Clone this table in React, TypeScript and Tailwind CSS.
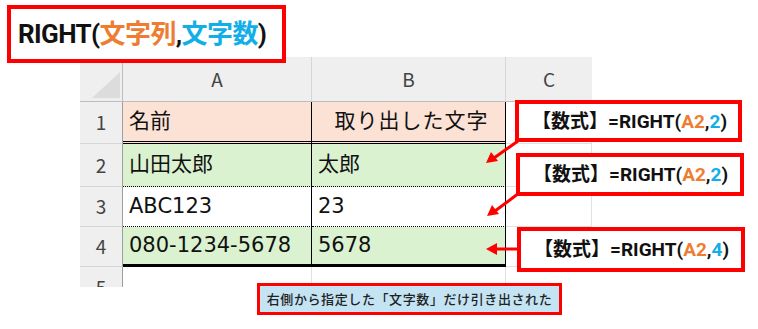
import React from 'react';

const ORANGE = 'text-[#ED7D31]';
const BLUE = 'text-[#12AEE8]';

const cellFont = { fontFamily: '"DejaVu Sans", "Noto Sans CJK JP", sans-serif' };
const uiFont = { fontFamily: '"Noto Sans CJK JP", "Noto Sans", sans-serif' };
const boldFont = { fontFamily: 'Roboto, "Noto Sans CJK JP", sans-serif' };

function Formula({ n, className }: { n: string; className: string }) {
  return (
    <div
      className={`absolute border-[4px] border-[#FF0000] bg-white flex items-center whitespace-nowrap pl-[13px] text-[19px] font-bold text-[#111] leading-none ${className}`}
      style={boldFont}
    >
      <span>【数式】=RIGHT(</span>
      <span className={ORANGE}>A2</span>
      <span>,</span>
      <span className={BLUE}>{n}</span>
      <span>)</span>
    </div>
  );
}

export default function App() {
  const head = 'bg-[#EFEFEF] flex items-center justify-center text-[19px] text-[#444]';
  const rowNum = `${head} border-r border-r-[#9E9E9E] border-b border-b-[#D6D6D6]`;
  const txt = 'flex items-center whitespace-nowrap pl-[6px] text-[21px] text-[#111]';
  const dotted = 'border-r border-r-black border-b border-b-black [border-bottom-style:dotted]';
  const cEmpty = 'border-r border-b border-[#E1E1E1] bg-white';

  return (
    <div className="relative w-[758px] h-[329px] bg-white overflow-hidden" style={uiFont}>
      {/* sheet */}
      <div className="ml-[80px] pt-[57px]">
        <div className="grid grid-cols-[43px_189px_194px_86px] grid-rows-[45px_42px_43px_40px_40px_20px]">
          {/* header row */}
          <div className="relative bg-[#EFEFEF] border-r border-b border-[#BDBDBD]">
            <svg className="absolute left-0 top-0" width="42" height="44">
              <polygon points="12,41 40,15 40,41" fill="#DCDCDC" />
            </svg>
          </div>
          <div className={`${head} border-r border-r-[#D6D6D6] border-b border-b-[#BDBDBD]`}>A</div>
          <div className={`${head} border-r border-r-[#D6D6D6] border-b border-b-[#BDBDBD]`}>B</div>
          <div className={`${head} border-b border-b-[#BDBDBD]`}>C</div>

          {/* row 1 */}
          <div className={rowNum}>1</div>
          <div className={`${txt} bg-[#FBE2D5] border-r border-r-black border-b-[3px] border-b-black [border-bottom-style:double]`} style={cellFont}>名前</div>
          <div className={`${txt} justify-center pl-0 tracking-[1px] bg-[#FBE2D5] border-r border-r-black border-b-[3px] border-b-black [border-bottom-style:double]`} style={cellFont}>取り出した文字</div>
          <div className={cEmpty}></div>

          {/* row 2 */}
          <div className={rowNum}>2</div>
          <div className={`${txt} bg-[#DAF2D0] ${dotted}`} style={cellFont}>山田太郎</div>
          <div className={`${txt} bg-[#DAF2D0] ${dotted}`} style={cellFont}>太郎</div>
          <div className={cEmpty}></div>

          {/* row 3 */}
          <div className={rowNum}>3</div>
          <div className={`${txt} bg-white ${dotted}`} style={cellFont}>ABC123</div>
          <div className={`${txt} bg-white ${dotted}`} style={cellFont}>23</div>
          <div className={cEmpty}></div>

          {/* row 4 */}
          <div className={rowNum}>4</div>
          <div className={`${txt} bg-[#DAF2D0] border-r border-r-black border-b-[3px] border-b-black`} style={cellFont}>080-1234-5678</div>
          <div className={`${txt} bg-[#DAF2D0] border-r border-r-black border-b-[3px] border-b-black`} style={cellFont}>5678</div>
          <div className={cEmpty}></div>

          {/* row 5 (cut off at the bottom, as in the sheet capture) */}
          <div className="bg-[#EFEFEF] overflow-hidden flex justify-center pt-[10px] text-[19px] text-[#444] leading-none border-r border-r-[#9E9E9E]">5</div>
          <div className="border-r border-[#E1E1E1]"></div>
          <div className="border-r border-[#E1E1E1]"></div>
          <div></div>
        </div>
      </div>

      {/* title */}
      <div
        className="absolute left-[7px] top-[5px] w-[279px] h-[58px] border-[4px] border-[#FF0000] bg-white flex items-center whitespace-nowrap pl-[7px] text-[26px] tracking-[-0.6px] font-bold text-[#111] leading-none"
        style={boldFont}
      >
        <span>RIGHT(</span>
        <span className={ORANGE}>文字列</span>
        <span>,</span>
        <span className={BLUE}>文字数</span>
        <span>)</span>
      </div>

      {/* arrows */}
      <svg className="absolute left-0 top-0" width="758" height="329">
        <g stroke="#FF0000" strokeWidth="3" fill="#FF0000">
          <line x1="518" y1="141" x2="494" y2="158" />
          <polygon points="486,163 491,152 498,161" stroke="none" />
          <line x1="519" y1="193" x2="495" y2="211" />
          <polygon points="487,216 492,205 499,214" stroke="none" />
          <line x1="518" y1="249" x2="496" y2="249" />
          <polygon points="486,249 497,243 497,255" stroke="none" />
        </g>
      </svg>

      <Formula n="2" className="left-[515px] top-[100px] w-[227px] h-[42px]" />
      <Formula n="2" className="left-[516px] top-[153px] w-[228px] h-[43px]" />
      <Formula n="4" className="left-[517px] top-[227px] w-[228px] h-[45px]" />

      {/* note */}
      <div className="absolute left-[257px] top-[283px] w-[305px] h-[32px] border-[3px] border-[#FF0000] bg-[#C4E4F4] flex items-center justify-center whitespace-nowrap text-[13px] font-medium tracking-[0.6px] text-[#222]">
        右側から指定した「文字数」だけ引き出された
      </div>
    </div>
  );
}
